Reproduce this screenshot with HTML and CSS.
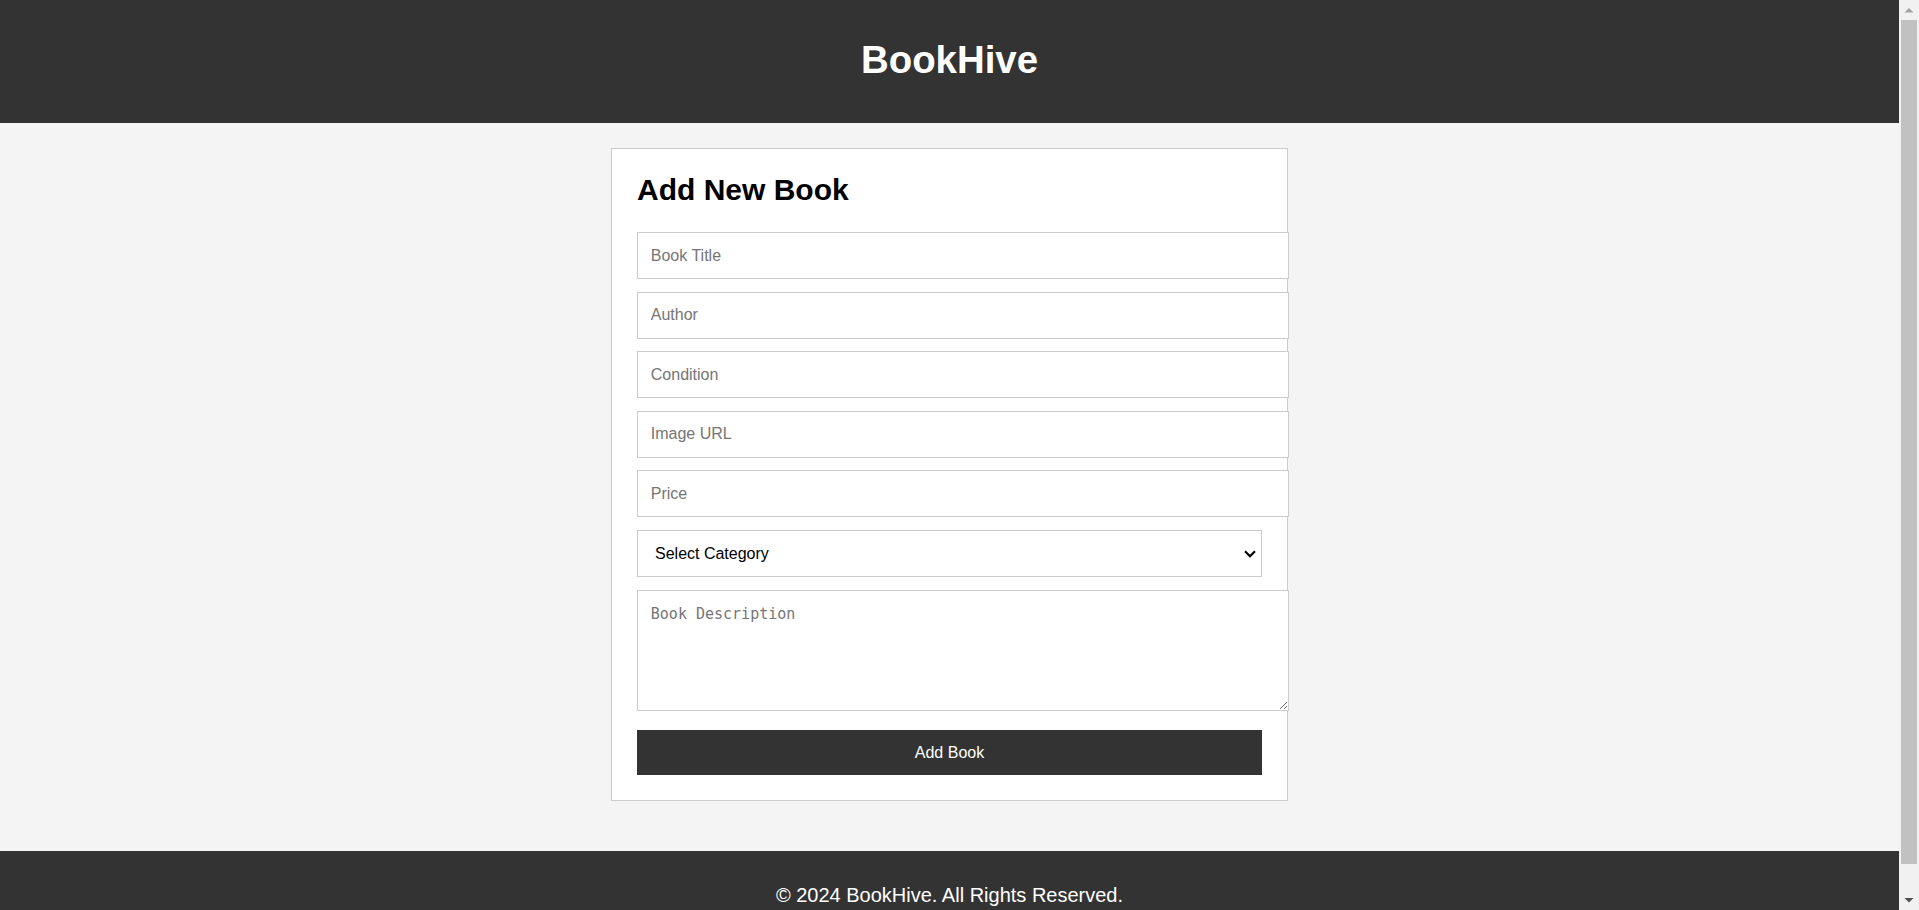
FILE: index.html
```html
<!DOCTYPE html>
<html lang="en">
<head>
<meta charset="utf-8">
<title>BookHive - Add New Book</title>
<link rel="stylesheet" href="styles.css">
</head>
<body>
<header class="site-header">
  <h1 class="site-title">BookHive</h1>
</header>
<main class="page">
  <section class="card">
    <h2 class="card-title">Add New Book</h2>
    <form class="book-form">
      <input class="field" type="text" placeholder="Book Title">
      <input class="field" type="text" placeholder="Author">
      <input class="field" type="text" placeholder="Condition">
      <input class="field" type="text" placeholder="Image URL">
      <input class="field" type="text" placeholder="Price">
      <select class="field-select">
        <option>Select Category</option>
        <option>Fiction</option>
        <option>Non-Fiction</option>
        <option>Science</option>
        <option>History</option>
      </select>
      <textarea class="field field-area" rows="5" placeholder="Book Description"></textarea>
      <button class="btn" type="button">Add Book</button>
    </form>
  </section>
</main>
<footer class="site-footer">
  <p class="footer-text">© 2024 BookHive. All Rights Reserved.</p>
</footer>
<div class="scrollbar" aria-hidden="true">
  <div class="sb-arrow">
    <svg width="20" height="20" viewBox="0 0 20 20"><polygon points="5.5,12.5 10,8 14.5,12.5" fill="#a3a3a3"/></svg>
  </div>
  <div class="sb-track"><div class="sb-thumb"></div></div>
  <div class="sb-arrow">
    <svg width="20" height="20" viewBox="0 0 20 20"><polygon points="5.5,8 14.5,8 10,12.5" fill="#505050"/></svg>
  </div>
</div>
</body>
</html>
```
FILE: styles.css
```css
html {
  background: #f4f4f4;
}

body {
  margin: 0 20px 0 0;
  background: #f4f4f4;
  font-family: "Liberation Sans", Arial, sans-serif;
  color: #000;
}

.site-header {
  background: #333;
  color: #fff;
  text-align: center;
  padding: 38px 0 41px;
}

.site-title {
  margin: 0;
  font-size: 38.4px;
  line-height: 44px;
  font-weight: bold;
}

.page {
  padding: 25px 0 50px;
}

.card {
  width: 625px;
  margin: 0 auto;
  padding: 25px;
  background: #fff;
  border: 1px solid #ccc;
}

.card-title {
  margin: 0 0 26px;
  font-size: 30px;
  line-height: 32px;
  font-weight: bold;
}

.book-form {
  display: flex;
  flex-direction: column;
  gap: 12.5px;
}

.field {
  box-sizing: border-box;
  width: calc(100% + 27px);
  height: 47px;
  margin: 0;
  padding: 0 12.8px;
  font-family: "Liberation Sans", Arial, sans-serif;
  font-size: 16px;
  border: 1px solid #ccc;
  border-radius: 0;
  background: #fff;
  color: #000;
  outline: none;
}

.field::placeholder {
  color: #757575;
}

.field-select {
  -webkit-appearance: none;
  appearance: none;
  box-sizing: border-box;
  width: 100%;
  height: 47px;
  margin: 0.5px 0 0;
  padding: 0 30px 0 17px;
  font-family: "Liberation Sans", Arial, sans-serif;
  font-size: 16px;
  color: #000;
  background-color: #fff;
  background-image: url("data:image/svg+xml;utf8,<svg xmlns='http://www.w3.org/2000/svg' width='12' height='8' viewBox='0 0 12 8'><polyline points='1,1.2 6,6.2 11,1.2' fill='none' stroke='%23000' stroke-width='2.2'/></svg>");
  background-repeat: no-repeat;
  background-position: right 5px center;
  border: 1px solid #ccc;
  border-radius: 0;
}

.field-area {
  height: 121px;
  padding: 14px 12.8px 12.8px;
  margin-top: 0.5px;
  font-family: "DejaVu Sans Mono", monospace;
  font-size: 15px;
  resize: vertical;
}

.btn {
  margin-top: 6.5px;
  width: 100%;
  height: 45px;
  padding: 0;
  border: none;
  background: #333;
  color: #fff;
  font-family: "Liberation Sans", Arial, sans-serif;
  font-size: 16px;
  cursor: pointer;
}

.site-footer {
  background: #333;
  color: #fff;
  text-align: center;
  padding: 33px 0 31px;
}

.footer-text {
  margin: 0;
  font-size: 20px;
  line-height: 23px;
}

.scrollbar {
  position: fixed;
  top: 0;
  right: 0;
  width: 20px;
  height: 100vh;
  background: #f1f1f1;
  display: flex;
  flex-direction: column;
}

.sb-arrow {
  height: 20px;
  flex: none;
}

.sb-arrow svg {
  display: block;
}

.sb-track {
  flex: 1;
  padding: 0 2px;
}

.sb-thumb {
  height: 844px;
  background: #c1c1c1;
}
```
